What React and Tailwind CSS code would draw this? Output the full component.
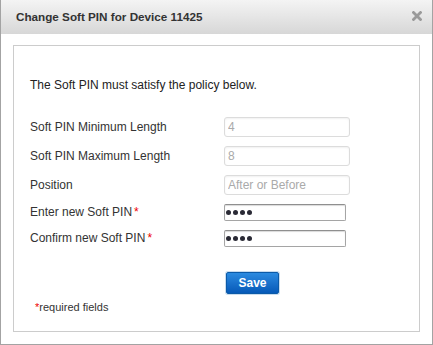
import React from "react";

const font = { fontFamily: '"Liberation Sans", Arial, sans-serif' };

function Field({ label, required, children }) {
  return (
    <div className="flex items-center">
      <div className="w-[194px] text-[12px] text-[#333]">
        {label}
        {required && <span className="text-[#e00] ml-[2px]">*</span>}
      </div>
      {children}
    </div>
  );
}

function ReadOnlyInput({ value }) {
  return (
    <input
      readOnly
      value={value}
      className="w-[126px] h-[20px] rounded-[3px] border border-[#dcdcdc] bg-white px-[3px] text-[12px] text-[#aaa] outline-none shadow-[inset_0_1px_2px_rgba(0,0,0,0.06)]"
      style={font}
    />
  );
}

function PinInput() {
  return (
    <div
      role="textbox"
      aria-label="Soft PIN"
      className="w-[122px] h-[17px] rounded-[2px] border border-[#a5a5a5] border-t-[#8f8f8f] bg-white pl-[1px] flex items-center gap-[2px] shadow-[inset_0_1px_1px_rgba(0,0,0,0.15)]"
    >
      {[0, 1, 2, 3].map((i) => (
        <span key={i} className="w-[5px] h-[5px] rounded-full bg-[#2a2a35]" />
      ))}
    </div>
  );
}

export default function App() {
  return (
    <div
      className="w-[433px] h-[345px] bg-white border border-t-0 border-[#a3a3a3] flex flex-col"
      style={font}
    >
      {/* Header */}
      <div className="h-[34px] shrink-0 flex items-center justify-between pl-[15px] pr-[10px] bg-gradient-to-b from-[#f4f4f4] to-[#d7d7d7]">
        <span className="text-[11.7px] font-bold text-[#333]">Change Soft PIN for Device 11425</span>
        <svg width="10" height="10" viewBox="0 0 10 10" className="mb-[3px]">
          <path d="M1.5 1.5 L8.5 8.5 M8.5 1.5 L1.5 8.5" stroke="#9a9a9a" strokeWidth="2.8" strokeLinecap="square" />
        </svg>
      </div>

      {/* Body */}
      <div className="flex-1 px-[12px] pt-[11px] pb-[12px]">
        <div className="h-full border border-[#cccccc] px-[16px] pt-[32px]">
          <p className="text-[12px] text-[#222] leading-[14px]">The Soft PIN must satisfy the policy below.</p>

          <div className="mt-[25px] flex flex-col gap-[9px]">
            <Field label="Soft PIN Minimum Length">
              <ReadOnlyInput value="4" />
            </Field>
            <Field label="Soft PIN Maximum Length">
              <ReadOnlyInput value="8" />
            </Field>
            <Field label="Position">
              <ReadOnlyInput value="After or Before" />
            </Field>
          </div>

          <div className="mt-[8px] flex flex-col gap-[8px]">
            <Field label="Enter new Soft PIN" required>
              <PinInput />
            </Field>
            <Field label="Confirm new Soft PIN" required>
              <PinInput />
            </Field>
          </div>

          <div className="mt-[25px] flex pl-[196px]">
            <button className="w-[53px] h-[22px] rounded-[2px] border border-[#0b5aa8] bg-gradient-to-b from-[#2b8ae0] to-[#0659b8] text-white text-[12px] font-bold shadow-[0_0_0_1px_#c9dcee]">
              Save
            </button>
          </div>

          <div className="mt-[5px] pl-[5px] text-[11px] text-[#333]">
            <span className="text-[#e00]">*</span>required fields
          </div>
        </div>
      </div>
    </div>
  );
}
